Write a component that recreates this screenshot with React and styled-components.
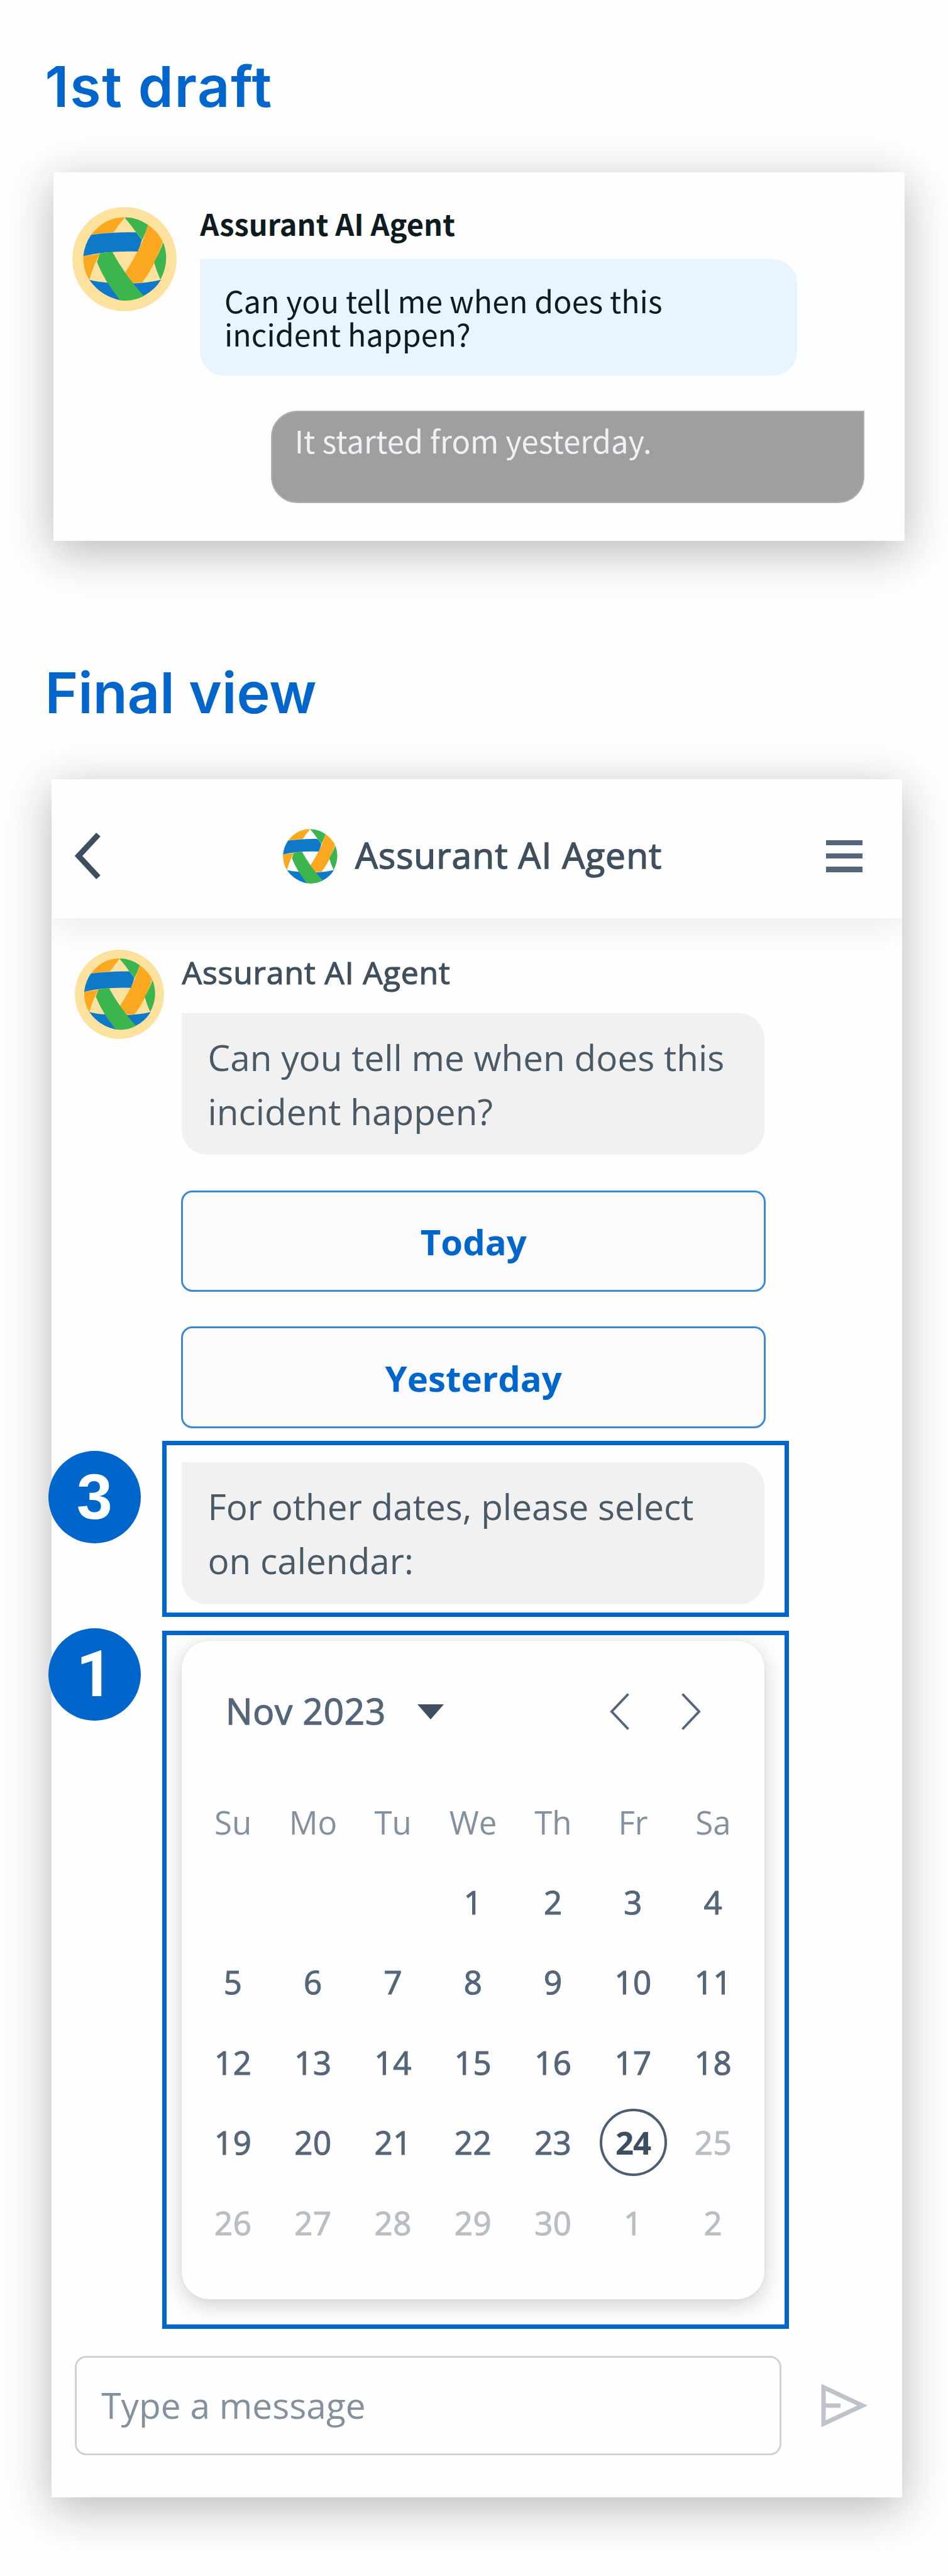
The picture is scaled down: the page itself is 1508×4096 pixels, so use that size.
import React from 'react'
import styled, { createGlobalStyle, ThemeProvider } from 'styled-components'

const theme = {
  colors: {
    blue: '#0066cc',
    slate: '#3f4f5d',
    slateLight: '#566679',
    body: '#4a5966',
    muted: '#84909d',
    disabled: '#b8bec4',
    bubble: '#f1f1f1',
    cream: '#fde19f',
    logoBlue: '#0f79c9',
    logoGreen: '#3cb54f',
    logoOrange: '#fba821',
  },
  fonts: {
    title: "'Inter', sans-serif",
    draft: "'Noto Sans CJK JP', 'Noto Sans', sans-serif",
    chat: "'Open Sans', sans-serif",
    badge: "'Liberation Sans', Arial, sans-serif",
    badgeOne: "'Roboto', sans-serif",
  },
}

const GlobalStyle = createGlobalStyle`
  * {
    box-sizing: border-box;
  }
  body {
    margin: 0;
    background: #fefefe;
  }
  h2, p {
    margin: 0;
  }
`

const Page = styled.main`
  width: 1508px;
  height: 4096px;
  padding-top: 82.5px;
  overflow: hidden;
`

const Title = styled.h2`
  margin-left: 71.5px;
  font-family: ${({ theme }) => theme.fonts.title};
  font-size: 89.75px;
  font-weight: 600;
  line-height: 110px;
  letter-spacing: ${({ $spacing }) => $spacing || '0'};
  color: ${({ theme }) => theme.colors.blue};
`

const Card = styled.section`
  background: #fefefe;
  box-shadow: 0 17px 68px rgba(20, 22, 24, 0.3);
`

const DraftCard = styled(Card)`
  display: flex;
  width: 1354px;
  height: 586px;
  margin: 81.5px 0 187px 84.6px;
  padding: 55px 0 0 30px;
  font-family: ${({ theme }) => theme.fonts.draft};
  color: #0e1b20;
`

const FinalCard = styled(Card)`
  width: 1353.4px;
  height: 2732.4px;
  margin: 81.6px 0 0 81.6px;
  font-family: ${({ theme }) => theme.fonts.chat};
  color: ${({ theme }) => theme.colors.slate};
`

const Avatar = styled.svg`
  flex: none;
  width: ${({ $size }) => $size}px;
  height: ${({ $size }) => $size}px;
`

const DraftColumn = styled.div`
  display: flex;
  flex-direction: column;
  margin: -4px 0 0 37.7px;
`

const DraftName = styled.p`
  font-size: 47px;
  font-weight: 700;
  line-height: 60px;
  white-space: nowrap;
`

const DraftBubble = styled.p`
  width: 950px;
  height: 185px;
  margin-top: 27.4px;
  padding: 38.6px 0 0 38.6px;
  border-radius: 0 38px 38px 38px;
  background: #e8f5ff;
  font-size: 48.4px;
  line-height: 53px;
  white-space: nowrap;
`

const ReplyBubble = styled(DraftBubble)`
  width: 944px;
  height: 147px;
  margin: 56px 0 0 112.5px;
  padding: 17.5px 0 0 36px;
  border: 2px solid #adb1b5;
  border-radius: 42px 0 42px 42px;
  background: #9f9f9f;
  font-size: 48.9px;
  color: #eef1f5;
`

const Header = styled.header`
  display: flex;
  align-items: center;
  height: 221px;
  padding: 24px 62.6px 0 37.4px;
  box-shadow: 0 14px 52px rgba(0, 0, 0, 0.075);
  clip-path: inset(0 0 -90px 0);
`

const BackIcon = styled.svg`
  width: 42px;
  height: 76px;
`

const Brand = styled.div`
  display: flex;
  align-items: center;
  gap: 28px;
  margin-left: 289px;
`

const BrandName = styled.span`
  padding-bottom: 4px;
  font-size: 57px;
  line-height: 70px;
  letter-spacing: 1px;
  -webkit-text-stroke: 1.4px currentColor;
  white-space: nowrap;
`

const Burger = styled.div`
  display: flex;
  flex-direction: column;
  gap: 13px;
  margin-left: auto;
`

const BurgerBar = styled.span`
  width: 58.5px;
  height: 8.4px;
  background: ${({ theme }) => theme.colors.slateLight};
`

const Conversation = styled.div`
  display: flex;
  padding: 50.5px 0 0 37px;
`

const Column = styled.div`
  display: flex;
  flex-direction: column;
  width: 927px;
  margin-left: 28.9px;
`

const AgentName = styled.p`
  margin-top: 6px;
  font-size: 50px;
  line-height: 60px;
  letter-spacing: 0.8px;
  -webkit-text-stroke: 1.2px currentColor;
  white-space: nowrap;
`

const Bubble = styled.p`
  flex: none;
  width: 927px;
  height: 225.4px;
  margin-top: ${({ $top }) => $top || 0};
  padding: 27px 0 0 41px;
  border-radius: 0 40px 40px 40px;
  background: ${({ theme }) => theme.colors.bubble};
  font-size: 56.7px;
  line-height: 86px;
  color: ${({ theme }) => theme.colors.body};
  white-space: nowrap;
`

const ReplyButton = styled.button`
  height: ${({ $height }) => $height}px;
  margin: ${({ $top }) => $top}px -1.5px 0 -1px;
  padding: 1px 0 0;
  border: 3px solid #3b89d8;
  border-radius: 18px;
  background: #fbfbfe;
  font-family: inherit;
  font-size: 56.3px;
  font-weight: 700;
  color: ${({ theme }) => theme.colors.blue};
`

const Callout = styled.div`
  position: relative;
  width: 996.5px;
  height: ${({ $height }) => $height}px;
  margin: ${({ $top }) => $top}px 0 0 -31px;
  padding: ${({ $inset }) => $inset}px 0 0 24px;
  border: 7px solid ${({ theme }) => theme.colors.blue};
`

const Badge = styled.span`
  position: absolute;
  top: ${({ $top }) => $top}px;
  left: -188.5px;
  display: flex;
  align-items: center;
  justify-content: center;
  width: 147px;
  height: 147px;
  border-radius: 50%;
  background: ${({ theme }) => theme.colors.blue};
  font-family: ${({ theme, $font }) => theme.fonts[$font || 'badge']};
  font-size: 102px;
  font-weight: 700;
  color: #fff;
`

const Calendar = styled.div`
  width: 926.5px;
  height: 1047px;
  padding-top: 82.6px;
  border-radius: 44px;
  background: #fefefe;
  box-shadow: 0 9px 34px rgba(0, 0, 0, 0.18), 0 0 4px rgba(0, 0, 0, 0.06);
`

const MonthBar = styled.div`
  display: flex;
  align-items: center;
  height: 60px;
  padding: 0 100.5px 0 69.5px;
`

const Month = styled.span`
  font-size: 56.5px;
  line-height: 60px;
  letter-spacing: 0.8px;
  -webkit-text-stroke: 1.3px currentColor;
  color: ${({ theme }) => theme.colors.slateLight};
`

const Caret = styled.svg`
  width: 42px;
  height: 25px;
  margin-left: 50px;
`

const Arrows = styled.div`
  display: flex;
  gap: 83px;
  margin-left: auto;
`

const ArrowIcon = styled.svg`
  width: 31px;
  height: 59px;
`

const Week = styled.div`
  display: grid;
  grid-template-columns: repeat(7, 127.3px);
  grid-auto-rows: ${({ $row }) => $row}px;
  place-items: center;
  margin: ${({ $top }) => $top || 0}px 0 0 17.5px;
`

const Weekday = styled.span`
  font-size: 51px;
  line-height: 60px;
  color: ${({ theme }) => theme.colors.muted};
`

const Day = styled.span`
  font-size: 51px;
  line-height: 60px;
  letter-spacing: 0.5px;
  -webkit-text-stroke: 1.2px currentColor;
  color: ${({ theme, $disabled }) => ($disabled ? theme.colors.disabled : theme.colors.slateLight)};
`

const Today = styled(Day)`
  display: flex;
  align-items: center;
  justify-content: center;
  width: 107px;
  height: 107px;
  border: 4px solid #4a5d72;
  border-radius: 50%;
  font-weight: 700;
  letter-spacing: -1px;
  -webkit-text-stroke: 0;
  color: #3c4f60;
`

const Footer = styled.footer`
  display: flex;
  align-items: center;
  margin-top: 42.6px;
  padding-left: 37.7px;
`

const Field = styled.div`
  display: flex;
  align-items: center;
  width: 1124px;
  height: 158.5px;
  padding: 0 0 2px 39px;
  border: 3.5px solid #cfd2d4;
  border-radius: 18px;
  font-size: 56.8px;
  color: ${({ theme }) => theme.colors.muted};
`

const SendIcon = styled.svg`
  width: 76px;
  height: 68px;
  margin-left: 62px;
`

const Logo = ({ size, ring }) => (
  <Avatar $size={size} viewBox={ring ? '67 87 574 575' : '126 143 460 460'}>
    {ring && <circle cx="354" cy="374.5" r="287" fill={theme.colors.cream} />}
    <g fill={theme.colors.logoOrange}>
      <path d="M355 144 Q245 143 170 241 L294 226 Q322 186 355 146Z" />
      <path d="M484 186 Q540 225 564 278 Q530 400 452 503 L394 507 L357 450 Q455 300 484 186Z" />
      <path d="M127 358 L220 345 Q185 400 160 490 Q124 430 127 358Z" />
    </g>
    <g fill={theme.colors.logoBlue}>
      <path d="M170 241 Q290 225 418 227 L450 268 Q440 305 427 333 Q260 328 127 358 Q135 290 170 241Z" />
      <path d="M160 489 Q205 501 262 504 L332 601 Q225 580 160 489Z" />
      <path d="M398 509 Q480 506 555 489 Q522 545 458 578Z" />
    </g>
    <g fill={theme.colors.logoGreen}>
      <path d="M358 144 Q425 145 484 186 Q472 230 452 268 L418 227 Q385 180 358 150Z" />
      <path d="M567 282 Q607 385 552 488 Q530 440 517 392 Q550 335 567 282Z" />
      <path d="M220 342 L287 335 Q355 460 460 578 Q400 610 332 601 Q245 500 202 390Z" />
    </g>
  </Avatar>
)

const Chevron = ({ flip }) => (
  <ArrowIcon viewBox="0 0 31 59" fill="none" stroke={theme.colors.slateLight} strokeWidth="4">
    <path d={flip ? 'M1.5 1.5 L28 29.5 L1.5 57.5' : 'M29.5 1.5 L3 29.5 L29.5 57.5'} />
  </ArrowIcon>
)

const weekdays = ['Su', 'Mo', 'Tu', 'We', 'Th', 'Fr', 'Sa']

// three leading blanks, then November, then the first days of December
const days = [null, null, null]
for (let i = 1; i <= 32; i += 1) {
  days.push({ label: i > 30 ? i - 30 : i, today: i === 24, disabled: i > 24 })
}

const App = () => {
  return (
    <ThemeProvider theme={theme}>
      <GlobalStyle />
      <Page>
        <Title $spacing="1.7px">1st draft</Title>
        <DraftCard>
          <Logo size={166} ring />
          <DraftColumn>
            <DraftName>Assurant AI Agent</DraftName>
            <DraftBubble>
              Can you tell me when does this
              <br />
              incident happen?
            </DraftBubble>
            <ReplyBubble>It started from yesterday.</ReplyBubble>
          </DraftColumn>
        </DraftCard>

        <Title>Final view</Title>
        <FinalCard>
          <Header>
            <BackIcon viewBox="0 0 42 76" fill="none" stroke={theme.colors.slate} strokeWidth="9">
              <path d="M37.5 4 L6 38 L37.5 72" />
            </BackIcon>
            <Brand>
              <Logo size={87} />
              <BrandName>Assurant AI Agent</BrandName>
            </Brand>
            <Burger>
              <BurgerBar />
              <BurgerBar />
              <BurgerBar />
            </Burger>
          </Header>

          <Conversation>
            <Logo size={142} ring />
            <Column>
              <AgentName>Assurant AI Agent</AgentName>
              <Bubble $top="35px">
                Can you tell me when does this
                <br />
                incident happen?
              </Bubble>
              <ReplyButton $top={57} $height={160.5}>
                Today
              </ReplyButton>
              <ReplyButton $top={55.5} $height={162}>
                Yesterday
              </ReplyButton>
              <Callout $height={280} $top={20} $inset={27}>
                <Badge $top={9}>3</Badge>
                <Bubble>
                  For other dates, please select
                  <br />
                  on calendar:
                </Bubble>
              </Callout>
              <Callout $height={1110.5} $top={21.4} $inset={9}>
                <Badge $top={-11} $font="badgeOne">
                  1
                </Badge>
                <Calendar>
                  <MonthBar>
                    <Month>Nov 2023</Month>
                    <Caret viewBox="0 0 42 25">
                      <path d="M0 1 H42 L21 25Z" fill={theme.colors.slate} />
                    </Caret>
                    <Arrows>
                      <Chevron />
                      <Chevron flip />
                    </Arrows>
                  </MonthBar>
                  <Week $row={125.6} $top={83}>
                    {weekdays.map((name) => (
                      <Weekday key={name}>{name}</Weekday>
                    ))}
                  </Week>
                  <Week $row={127.5}>
                    {days.map((day, i) => {
                      if (!day) return <span key={i} />
                      if (day.today) return <Today key={i}>{day.label}</Today>
                      return (
                        <Day key={i} $disabled={day.disabled}>
                          {day.label}
                        </Day>
                      )
                    })}
                  </Week>
                </Calendar>
              </Callout>
            </Column>
          </Conversation>

          <Footer>
            <Field>Type a message</Field>
            <SendIcon viewBox="0 0 76 68" fill="none" stroke="#bdc3c8" strokeWidth="7">
              <path d="M5 5 L67 34 L5 63Z" />
              <path d="M5 34 H32" />
            </SendIcon>
          </Footer>
        </FinalCard>
      </Page>
    </ThemeProvider>
  )
}

export default App
